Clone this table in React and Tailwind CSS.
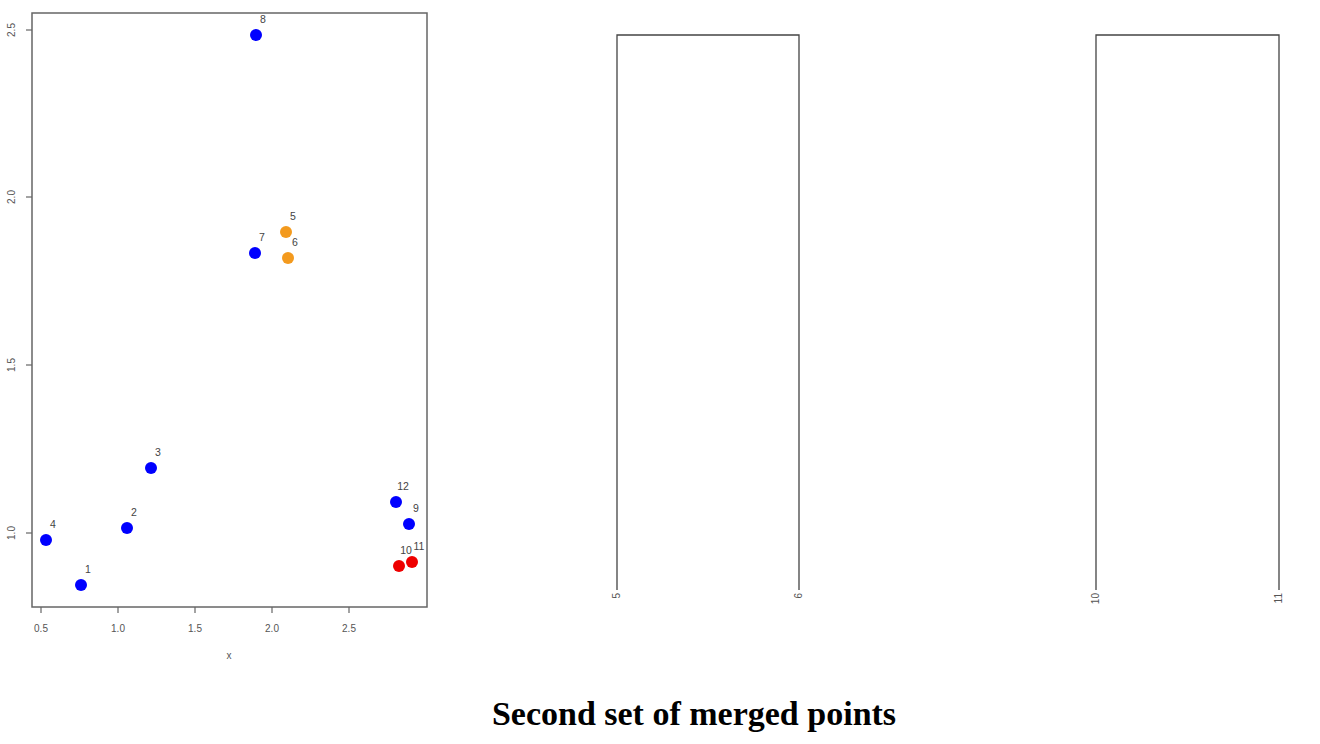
const points = [
  { id: "8", x: 256, y: 35, c: "#0000ff" },
  { id: "5", x: 286, y: 232, c: "#f39a1e" },
  { id: "6", x: 288, y: 258, c: "#f39a1e" },
  { id: "7", x: 255, y: 253, c: "#0000ff" },
  { id: "3", x: 151, y: 468, c: "#0000ff" },
  { id: "2", x: 127, y: 528, c: "#0000ff" },
  { id: "4", x: 46, y: 540, c: "#0000ff" },
  { id: "1", x: 81, y: 585, c: "#0000ff" },
  { id: "12", x: 396, y: 502, c: "#0000ff" },
  { id: "9", x: 409, y: 524, c: "#0000ff" },
  { id: "10", x: 399, y: 566, c: "#ee0000" },
  { id: "11", x: 412, y: 562, c: "#ee0000" },
];

const xTicks = [
  { v: "0.5", x: 41 },
  { v: "1.0", x: 118 },
  { v: "1.5", x: 195 },
  { v: "2.0", x: 272 },
  { v: "2.5", x: 349 },
];

const yTicks = [
  { v: "2.5", y: 30 },
  { v: "2.0", y: 197 },
  { v: "1.5", y: 365 },
  { v: "1.0", y: 533 },
];

function ScatterPlot() {
  return (
    <svg width="440" height="680" className="block shrink-0" fontFamily="Liberation Sans, Arial, sans-serif">
      <rect x="32" y="13" width="395" height="594" fill="none" stroke="#666" strokeWidth="1.5" />
      {xTicks.map((t) => (
        <g key={t.v}>
          <line x1={t.x} y1="607" x2={t.x} y2="613" stroke="#666" strokeWidth="1.2" />
          <text x={t.x} y="632" fontSize="10" fill="#555" textAnchor="middle">{t.v}</text>
        </g>
      ))}
      {yTicks.map((t) => (
        <g key={t.v}>
          <line x1="26" y1={t.y} x2="32" y2={t.y} stroke="#666" strokeWidth="1.2" />
          <text x="15" y={t.y} fontSize="10" fill="#555" textAnchor="middle" transform={`rotate(-90 15 ${t.y})`}>{t.v}</text>
        </g>
      ))}
      <text x="229" y="659" fontSize="10" fill="#555" textAnchor="middle">x</text>
      {points.map((p) => (
        <g key={p.id}>
          <circle cx={p.x} cy={p.y} r="6" fill={p.c} />
          <text x={p.x + 7} y={p.y - 12} fontSize="10.5" fill="#444" textAnchor="middle">{p.id}</text>
        </g>
      ))}
    </svg>
  );
}

function Dendrogram({ left, right, a, b }) {
  return (
    <svg width="440" height="680" className="block shrink-0" fontFamily="Liberation Sans, Arial, sans-serif">
      <path d={`M${left} 590 V35 H${right} V590`} fill="none" stroke="#444" strokeWidth="1.3" />
      <text x={left} y="593" fontSize="10" fill="#555" textAnchor="end" dominantBaseline="middle" transform={`rotate(-90 ${left} 593)`}>{a}</text>
      <text x={right} y="593" fontSize="10" fill="#555" textAnchor="end" dominantBaseline="middle" transform={`rotate(-90 ${right} 593)`}>{b}</text>
    </svg>
  );
}

export default function App() {
  return (
    <div className="w-[1320px] h-[744px] bg-white overflow-hidden">
      <div className="flex h-[680px]">
        <ScatterPlot />
        <Dendrogram left={177} right={359} a="5" b="6" />
        <Dendrogram left={216} right={399} a="10" b="11" />
      </div>
      <div className="pl-[68px] pt-[2px] text-center text-[34px] leading-[64px] font-bold text-black font-['Liberation_Serif',serif]">
        Second set of merged points
      </div>
    </div>
  );
}
